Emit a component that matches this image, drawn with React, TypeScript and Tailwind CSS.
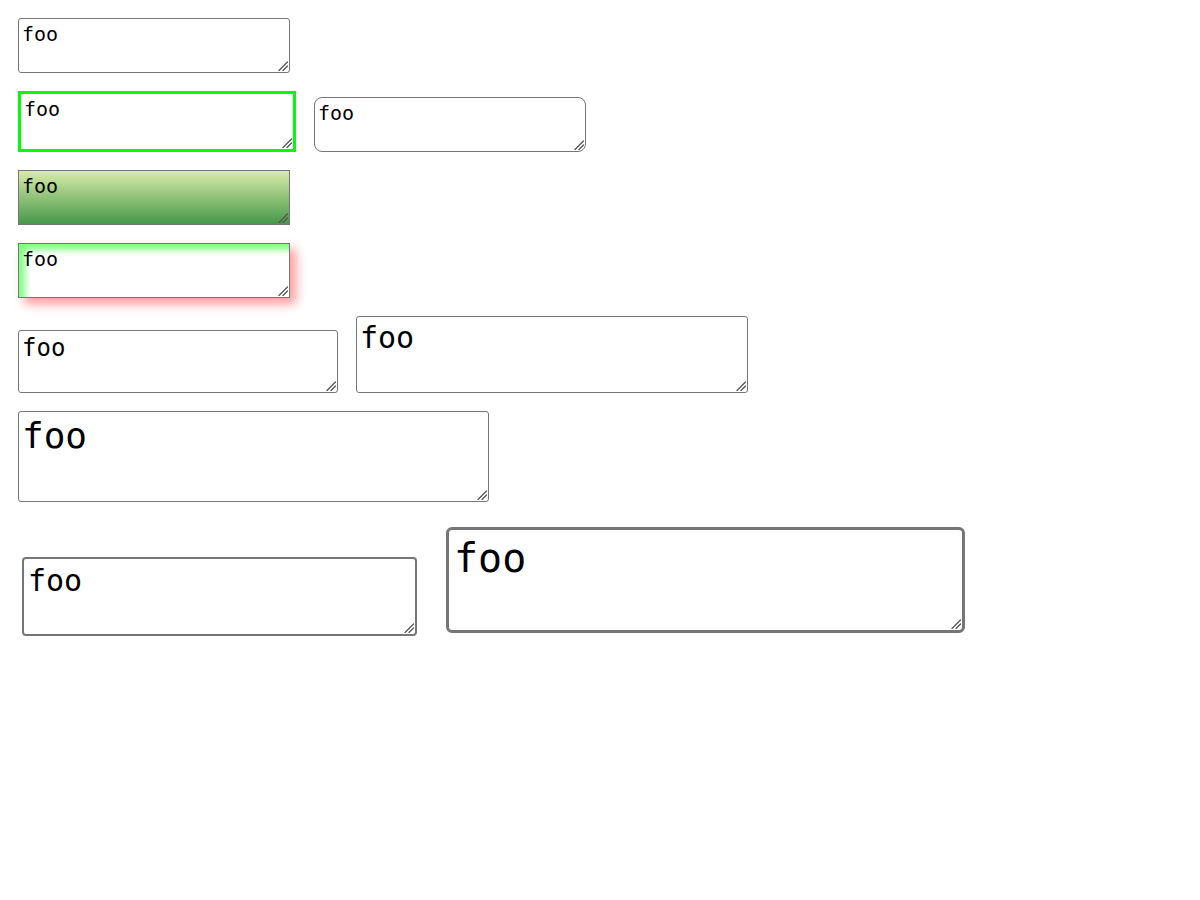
import React from 'react';

// shared look of a plain textarea, since preflight strips the native one
const base =
  "block bg-white text-black font-['DejaVu_Sans_Mono',monospace] leading-[normal] resize-none outline-none";

function Grip({ className }: { className: string }) {
  return (
    <svg
      width="10"
      height="10"
      viewBox="0 0 10 10"
      className={`absolute pointer-events-none ${className}`}
    >
      <path d="M1 9.5 L9.5 1 M5 9.5 L9.5 5" stroke="#555" strokeWidth="1.3" strokeLinecap="round" />
    </svg>
  );
}

function Field({
  box,
  wrap = '',
  grip = 'right-[2px] bottom-[2px]',
}: {
  box: string;
  wrap?: string;
  grip?: string;
}) {
  return (
    <div className={`relative shrink-0 ${wrap}`}>
      <textarea defaultValue="foo" className={`${base} ${box}`} />
      <Grip className={grip} />
    </div>
  );
}

export default function App() {
  return (
    <div className="min-h-[900px] w-[1200px] bg-white flex flex-col items-start pt-[18px] pl-[18px]">
      <Field box="p-[3px] w-[272px] h-[55px] text-[20px] border border-[#767676] rounded-[3px]" />

      <div className="mt-[18px] flex items-start gap-[18px]">
        <Field
          box="p-[3px] w-[278px] h-[61px] text-[20px] border-[3px] border-[#00ff00]"
          grip="right-[4px] bottom-[4px]"
        />
        <Field
          wrap="mt-[6px]"
          box="p-[3px] w-[272px] h-[55px] text-[20px] border border-[#767676] rounded-[8px]"
        />
      </div>

      <Field
        wrap="mt-[18px]"
        box="p-[3px] w-[272px] h-[55px] text-[20px] border border-[#767676] bg-[linear-gradient(to_bottom,#d8eba8,#46994a)]"
      />

      <Field
        wrap="mt-[18px]"
        box="p-[3px] w-[272px] h-[55px] text-[20px] border border-[#767676] shadow-[inset_6px_6px_6px_#80ff80,6px_6px_10px_rgba(255,0,0,0.4)]"
      />

      <div className="mt-[18px] flex items-start gap-[18px]">
        <Field
          wrap="mt-[14px]"
          box="p-[3px] w-[320px] h-[63px] text-[24px] border border-[#767676] rounded-[3px]"
        />
        <Field box="p-[3px] w-[392px] h-[77px] text-[30px] border border-[#767676] rounded-[3px]" />
      </div>

      <Field
        wrap="mt-[18px]"
        box="p-[3px] w-[471px] h-[91px] text-[36px] border border-[#767676] rounded-[3px]"
      />

      <div className="mt-[25px] flex items-start gap-[29px]">
        <Field
          wrap="ml-[4px] mt-[30px]"
          box="p-[4px] w-[395px] h-[79px] text-[30px] border-2 border-[#767676] rounded-[4px]"
          grip="right-[3px] bottom-[3px]"
        />
        <Field
          box="p-[5px] w-[519px] h-[106px] text-[40px] border-[3px] border-[#767676] rounded-[6px]"
          grip="right-[4px] bottom-[4px]"
        />
      </div>
    </div>
  );
}
